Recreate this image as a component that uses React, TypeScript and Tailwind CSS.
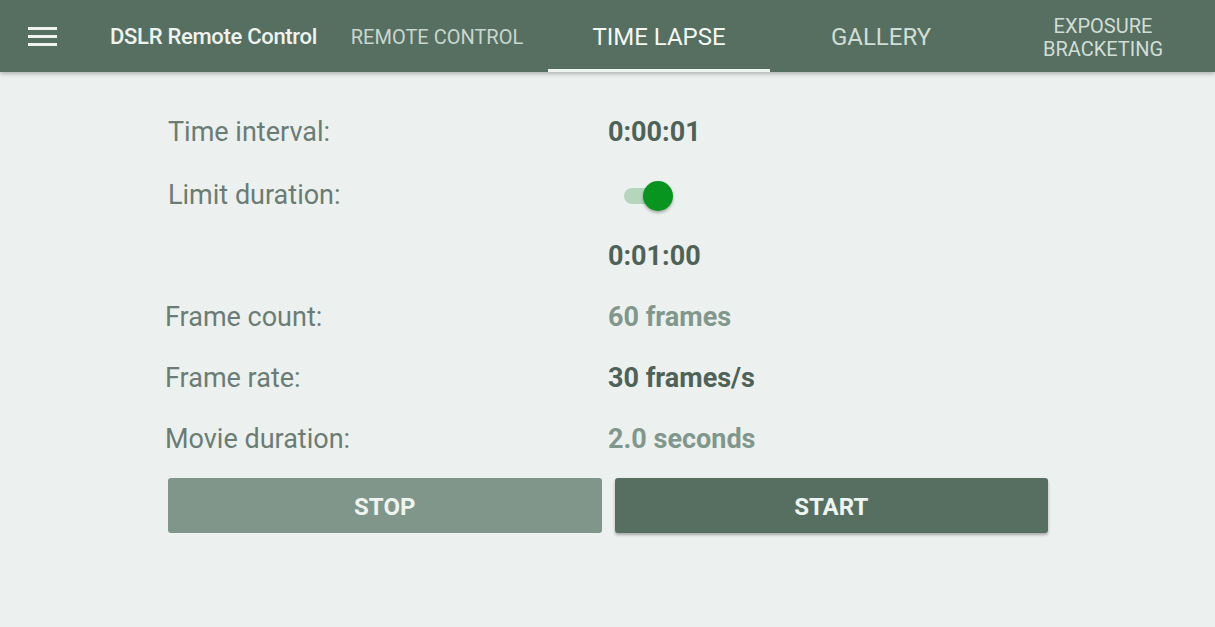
import { useState } from 'react';

const tabs = ['REMOTE CONTROL', 'TIME LAPSE', 'GALLERY', 'EXPOSURE BRACKETING'];

function Row({ label, children, indent = false, className = '' }: { label: string; children: React.ReactNode; indent?: boolean; className?: string }) {
  return (
    <div className={`flex items-center h-[61px] ${className}`}>
      <div className={`w-[608px] text-[27px] text-[#6b7c74] ${indent ? 'pl-[165px]' : 'pl-[168px]'}`}>{label}</div>
      <div className="flex-1">{children}</div>
    </div>
  );
}

export default function App() {
  const [active, setActive] = useState(1);
  const [limit, setLimit] = useState(true);

  return (
    <div className="w-[1215px] h-[627px] bg-[#ecf1ef] overflow-hidden" style={{ fontFamily: 'Roboto, "Liberation Sans", sans-serif' }}>
      {/* Toolbar */}
      <div className="relative z-10 h-[72px] bg-[#566f61] flex items-stretch shadow-[0_2px_4px_rgba(0,0,0,0.25)]">
        <button className="w-[86px] flex flex-col justify-center gap-[5px] pl-[28px]">
          <span className="block w-[29px] h-[3px] bg-[#eef3f0]" />
          <span className="block w-[29px] h-[3px] bg-[#eef3f0]" />
          <span className="block w-[29px] h-[3px] bg-[#eef3f0]" />
        </button>
        <div className="w-[240px] flex items-center pl-[24px] text-[22px] font-medium text-[#eef3f0] tracking-[-0.3px] whitespace-nowrap">
          DSLR Remote Control
        </div>
        {tabs.map((t, i) => (
          <button
            key={t}
            onClick={() => setActive(i)}
            className={`relative w-[222px] flex items-center justify-center text-center leading-[23px] px-4 pt-[3px] ${
              i === active ? 'text-[24px] text-[#f4f8f5]' : i === 0 ? 'text-[20px] text-[#c9d6cf]' : i === 3 ? 'text-[20px] text-[#d2ddd6]' : 'text-[24px] text-[#d2ddd6]'
            }`}
          >
            <span className={i === 3 ? 'w-[150px]' : 'whitespace-nowrap'}>{t}</span>
            {i === active && <span className="absolute left-0 right-0 bottom-0 h-[3px] bg-[#eef4f0]" />}
          </button>
        ))}
      </div>

      {/* Content */}
      <div className="pt-[30px] pr-[167px]">
        <Row label="Time interval:">
          <span className="text-[27px] font-bold text-[#4f6257]">0:00:01</span>
        </Row>
        <Row label="Limit duration:" className="mt-[2px]">
          <button onClick={() => setLimit(!limit)} className="relative w-[52px] h-[30px] flex items-center ml-[16px]">
            <span className={`block w-[46px] h-[16px] rounded-full ${limit ? 'bg-[#b5d6bd]' : 'bg-[#c8cfcb]'}`} />
            <span
              className={`absolute top-[0px] w-[30px] h-[30px] rounded-full shadow-[0_2px_3px_rgba(0,0,0,0.3)] ${
                limit ? 'left-[19px] bg-[#07951f]' : 'left-0 bg-[#f5f5f5]'
              }`}
            />
          </button>
        </Row>
        <Row label="">
          <span className="text-[27px] font-bold text-[#4f6257]">0:01:00</span>
        </Row>
        <Row label="Frame count:" indent>
          <span className="text-[27px] font-bold text-[#82978c]">60 frames</span>
        </Row>
        <Row label="Frame rate:" indent>
          <span className="text-[27px] font-bold text-[#4f6257]">30 frames/s</span>
        </Row>
        <Row label="Movie duration:" indent>
          <span className="text-[27px] font-bold text-[#82978c]">2.0 seconds</span>
        </Row>

        <div className="flex gap-[13px] pl-[168px] mt-[8px]">
          <button className="flex-1 h-[55px] pt-[2px] rounded-[3px] bg-[#80968a] text-[24px] font-bold text-[#eef4f0]">STOP</button>
          <button className="flex-1 h-[55px] pt-[2px] rounded-[3px] bg-[#566f61] text-[24px] font-bold text-[#eef4f0] shadow-[0_2px_3px_rgba(0,0,0,0.3)]">
            START
          </button>
        </div>
      </div>
    </div>
  );
}
